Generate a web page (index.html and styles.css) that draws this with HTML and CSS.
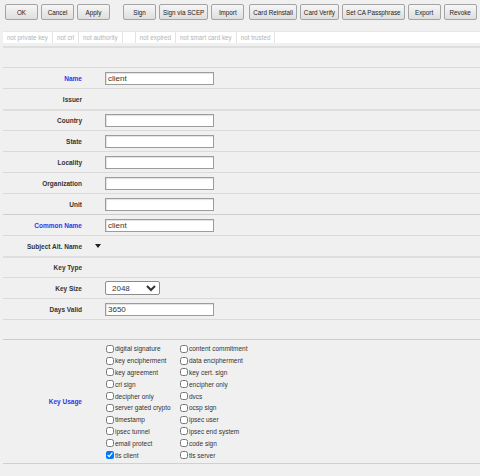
FILE: index.html
```html
<!DOCTYPE html>
<html lang="en">
  <head>
    <meta charset="UTF-8" />
    <meta name="viewport" content="width=device-width, initial-scale=1.0" />
    <title>Certificate</title>
    <link rel="stylesheet" href="styles.css">
  </head>
  <body>
    <div class="page">
      <div class="toolbar">
        <button>OK</button>
        <button>Cancel</button>
        <button>Apply</button>
        <button class="group">Sign</button>
        <button>Sign via SCEP</button>
        <button>Import</button>
        <button class="group-small">Card Reinstall</button>
        <button>Card Verify</button>
        <button>Set CA Passphrase</button>
        <button>Export</button>
        <button>Revoke</button>
      </div>

      <div class="status">
        <span class="cell">not private key</span>
        <span class="cell">not crl</span>
        <span class="cell">not authority</span>
        <span class="cell empty"></span>
        <span class="cell">not expired</span>
        <span class="cell">not smart card key</span>
        <span class="cell">not trusted</span>
      </div>

      <div class="form">
        <div class="row thick"></div>
        <div class="row">
          <label class="key blue" for="name">Name</label><span></span>
          <input type="text" id="name" value="client" />
        </div>
        <div class="row">
          <label class="key">Issuer</label><span></span><span></span>
        </div>
        <div class="row thick">
          <label class="key" for="country">Country</label><span></span>
          <input type="text" id="country" />
        </div>
        <div class="row">
          <label class="key" for="state">State</label><span></span>
          <input type="text" id="state" />
        </div>
        <div class="row">
          <label class="key" for="locality">Locality</label><span></span>
          <input type="text" id="locality" />
        </div>
        <div class="row">
          <label class="key" for="org">Organization</label><span></span>
          <input type="text" id="org" />
        </div>
        <div class="row">
          <label class="key" for="unit">Unit</label><span></span>
          <input type="text" id="unit" />
        </div>
        <div class="row dark">
          <label class="key blue" for="cn">Common Name</label><span></span>
          <input type="text" id="cn" value="client" />
        </div>
        <div class="row">
          <label class="key">Subject Alt. Name</label>
          <span class="toggle"><i class="arrow"></i></span>
          <span></span>
        </div>
        <div class="row thick">
          <label class="key">Key Type</label><span></span><span></span>
        </div>
        <div class="row">
          <label class="key" for="size">Key Size</label><span></span>
          <div>
            <select id="size">
              <option>2048</option>
              <option>4096</option>
            </select>
          </div>
        </div>
        <div class="row">
          <label class="key" for="days">Days Valid</label><span></span>
          <input type="text" id="days" value="3650" />
        </div>
        <div class="row short"></div>
        <div class="row usage dark">
          <label class="key blue">Key Usage</label><span></span>
          <div class="checks">
            <label><input type="checkbox" />digital signature</label>
            <label><input type="checkbox" />content commitment</label>
            <label><input type="checkbox" />key encipherment</label>
            <label><input type="checkbox" />data encipherment</label>
            <label><input type="checkbox" />key agreement</label>
            <label><input type="checkbox" />key cert. sign</label>
            <label><input type="checkbox" />crl sign</label>
            <label><input type="checkbox" />encipher only</label>
            <label><input type="checkbox" />decipher only</label>
            <label><input type="checkbox" />dvcs</label>
            <label><input type="checkbox" />server gated crypto</label>
            <label><input type="checkbox" />ocsp sign</label>
            <label><input type="checkbox" />timestamp</label>
            <label><input type="checkbox" />ipsec user</label>
            <label><input type="checkbox" />ipsec tunnel</label>
            <label><input type="checkbox" />ipsec end system</label>
            <label><input type="checkbox" />email protect</label>
            <label><input type="checkbox" />code sign</label>
            <label><input type="checkbox" checked />tls client</label>
            <label><input type="checkbox" />tls server</label>
          </div>
        </div>
        <div class="row end"></div>
      </div>
    </div>
  </body>
</html>
```

FILE: styles.css
```css
* {
  margin: 0;
  padding: 0;
  box-sizing: border-box;
}
body {
  background-color: #f0f0f0;
  font-family: "Liberation Sans", Arial, sans-serif;
  color: #333;
  overflow: hidden;
}
.page {
  padding: 4px 0 0 3px;
}
.toolbar {
  display: flex;
  gap: 3px;
  padding-left: 2px;
}
button {
  height: 16px;
  min-width: 33px;
  padding: 0 3px;
  font-family: "Liberation Sans", Arial, sans-serif;
  font-size: 6.3px;
  color: #222;
  background: linear-gradient(#f6f6f6, #dedede);
  border: 1px solid #a4a4a4;
  border-radius: 2px;
  white-space: nowrap;
}
.group {
  margin-left: 10px;
}
.group-small {
  margin-left: 2px;
}
.status {
  display: flex;
  height: 12px;
  margin-top: 11px;
  background-color: #fff;
  border-top: 1px solid #e6e6e6;
}
.cell {
  padding: 0 4px;
  line-height: 11px;
  font-size: 6.3px;
  color: #b4b4b4;
  border-right: 1px solid #e4e4e4;
  white-space: nowrap;
}
.empty {
  width: 13px;
}
.form {
  margin-top: 3px;
}
.row {
  display: grid;
  grid-template-columns: 79px 23px 1fr;
  align-items: center;
  height: 21px;
  border-top: 1px solid #dadada;
}
.row.thick {
  border-top: 2px solid #dedede;
}
.row.dark {
  border-top-color: #cdcdcd;
}
.row.short {
  height: 20px;
}
.row.end {
  height: 13px;
  border-top-color: #d0d0d0;
}
.key {
  text-align: right;
  font-size: 6.5px;
  font-weight: bold;
  color: #333;
}
.key.blue {
  color: #3434e8;
}
.toggle {
  padding-left: 13px;
}
.arrow {
  display: block;
  width: 0;
  height: 0;
  border-left: 3px solid transparent;
  border-right: 3px solid transparent;
  border-top: 4px solid #222;
}
input[type="text"] {
  width: 109px;
  height: 13px;
  padding: 0 2px;
  font-family: "Liberation Sans", Arial, sans-serif;
  font-size: 8px;
  color: #333;
  background-color: #fff;
  border: 1px solid #9c9c9c;
  box-shadow: inset 1px 1px 1px rgba(0, 0, 0, 0.12);
  outline: none;
}
select {
  display: block;
  width: 55px;
  height: 14px;
  padding-left: 2px;
  font-family: "Liberation Sans", Arial, sans-serif;
  font-size: 8px;
  color: #333;
  background-color: #fff;
  border: 1px solid #8c8c8c;
  border-radius: 2px;
}
.row.usage {
  height: 124px;
}
.checks {
  display: grid;
  grid-template-columns: 74px auto;
  grid-auto-rows: 11.8px;
  align-self: start;
  padding: 3px 0 0 1px;
}
.checks label {
  display: flex;
  align-items: center;
  gap: 1px;
  font-size: 6.5px;
  color: #333;
  white-space: nowrap;
}
.checks input {
  width: 8px;
  height: 8px;
  margin: 0;
}
```
